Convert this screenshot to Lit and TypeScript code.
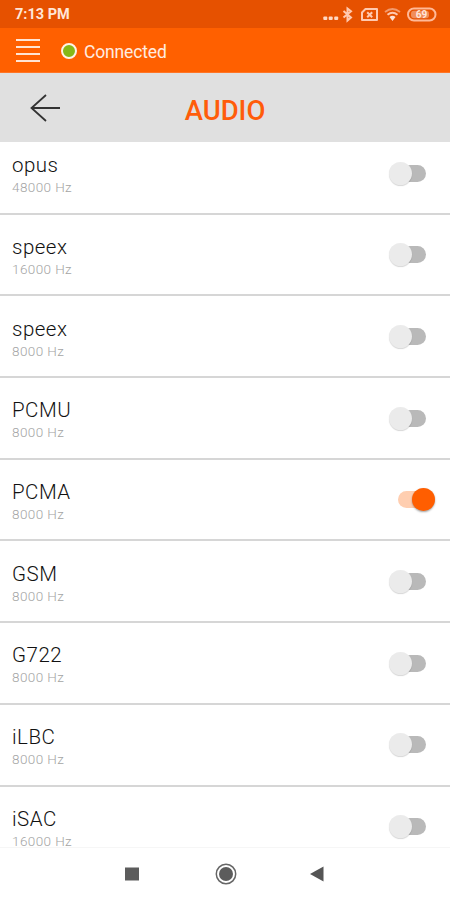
import { LitElement, html, css } from "lit";
import { customElement, property, state } from "lit/decorators.js";
import { classMap } from "lit/directives/class-map.js";

interface Codec {
  name: string;
  rate: number;
  enabled: boolean;
}

@customElement("toggle-switch")
class ToggleSwitch extends LitElement {
  @property({ type: Boolean }) on = false;

  static styles = css`
    :host { display: block; }
    .switch { display: flex; align-items: center; width: 46px; height: 24px; margin-top: 0.5px; }
    .track { width: 28px; height: 17px; border-radius: 9px; background: #b9b9b9; margin-left: 9px; }
    .thumb {
      width: 23px; height: 23px; border-radius: 50%; background: #ebebeb;
      box-shadow: 0 1px 1px rgba(0, 0, 0, 0.16); margin-left: -37px;
    }
    .on .track { background: #ffceb0; width: 30px; }
    .on .thumb { background: #ff5e00; margin-left: -16px; box-shadow: 0 1px 2px rgba(0, 0, 0, 0.35); }
  `;

  render() {
    return html`<div class=${classMap({ switch: true, on: this.on })}>
      <div class="track"></div><div class="thumb"></div>
    </div>`;
  }
}

@customElement("app-root")
class AppRoot extends LitElement {
  @state() codecs: Codec[] = [
    { name: "opus", rate: 48000, enabled: false },
    { name: "speex", rate: 16000, enabled: false },
    { name: "speex", rate: 8000, enabled: false },
    { name: "PCMU", rate: 8000, enabled: false },
    { name: "PCMA", rate: 8000, enabled: true },
    { name: "GSM", rate: 8000, enabled: false },
    { name: "G722", rate: 8000, enabled: false },
    { name: "iLBC", rate: 8000, enabled: false },
    { name: "iSAC", rate: 16000, enabled: false },
  ];

  static styles = css`
    :host {
      display: flex; flex-direction: column; width: 450px; height: 900px;
      overflow: hidden; background: #fff; font-family: Roboto, sans-serif;
    }
    svg { display: block; }
    .status {
      height: 28px; flex: none; background: #e65100; color: #ffe6d8; display: flex;
      align-items: center; justify-content: space-between; padding-left: 15px; box-sizing: border-box;
    }
    .time { font-size: 14.5px; font-weight: 700; line-height: 28px; padding-top: 1px; }
    .bar {
      height: 45px; flex: none; background: #ff6000; color: #ffece0; display: flex;
      align-items: center; box-sizing: border-box; padding-left: 16px; border-bottom: 1px solid #ff7526;
    }
    .burger { display: flex; flex-direction: column; gap: 4.8px; width: 24px; margin-top: 1px; }
    .burger i { height: 2px; background: #ffe4d4; }
    .dot {
      width: 12px; height: 12px; border-radius: 50%; background: #86b817;
      border: 2.5px solid #fff3e6; margin-left: 21px; margin-top: 1px;
    }
    .state { font-size: 17.5px; line-height: 20px; margin: 3px 0 0 7px; letter-spacing: -0.15px; }
    .header {
      height: 69px; flex: none; background: #e0e0e0; display: grid;
      grid-template-columns: 60px 1fr 60px; align-items: center;
    }
    .back { margin: 1px 0 0 29px; }
    .title { text-align: center; color: #ff5c0a; font-size: 27.5px; font-weight: 500; line-height: 34px; padding-top: 6px; }
    .list { flex: none; height: 705px; overflow: hidden; }
    .rows { margin-top: -9px; }
    .row {
      height: 81.7px; box-sizing: border-box; border-bottom: 2px solid #d6d6d6;
      display: flex; align-items: center; justify-content: space-between; padding: 0 15px 0 12px;
    }
    .name { font-size: 20.5px; font-weight: 300; line-height: 24px; color: #111; letter-spacing: 0.5px; margin-top: 2px; }
    .rate { font-size: 13.5px; font-weight: 300; line-height: 14px; color: #a4a4a4; letter-spacing: 0.4px; margin-top: 3px; }
    .nav {
      flex: 1; border-top: 1px solid #f6f6f6; display: flex; align-items: center;
      padding: 0 0 0 125px; box-sizing: border-box;
    }
    .home { margin-left: 76px; }
    .prev { margin-left: 73px; }
  `;

  render() {
    return html`
      <div class="status">
        <span class="time">7:13 PM</span>
        <svg width="130" height="28" viewBox="320 0 130 28" fill="none" stroke="#ffc9af">
          <g fill="#ffd8c4" stroke="none">
            <rect x="323.300" y="16.500" width="4" height="3.500" rx="1" /><rect x="328.700" y="16.500" width="4" height="3.500" rx="1" /><rect x="334.200" y="16.500" width="4" height="3.500" rx="1" />
          </g>
          <path d="M343.500 11l7.500 6.500-3.500 3V8.500l3.500 2.700-7.500 6.300" stroke-width="2" />
          <path d="M365.500 9h11.500v11h-15v-7.500z" stroke-width="2" stroke-linejoin="round" />
          <path d="M367.200 12.200l5 5m0-5l-5 5" stroke-width="2" />
          <path d="M385 12q7.500-6 15 0" stroke="#f29a6d" stroke-width="1.800" />
          <path d="M387.500 14.800q5-4 10 0" stroke-width="2" />
          <path d="M389.500 17q3-2.500 6 0l-3 4z" fill="#ffe3d5" stroke="none" />
          <rect x="408" y="8.600" width="27.500" height="11.800" rx="5.900" stroke="#ffb997" stroke-width="2" />
          <rect x="411" y="10.800" width="18" height="7.400" rx="3" fill="#f08d5b" stroke="none" />
          <text x="421.500" y="18" text-anchor="middle" font-size="10" font-weight="700" fill="#ffe6da" stroke="none">69</text>
        </svg>
      </div>
      <div class="bar">
        <div class="burger"><i></i><i></i><i></i><i></i></div>
        <div class="dot"></div>
        <span class="state">Connected</span>
      </div>
      <div class="header">
        <svg class="back" width="33" height="30" viewBox="0 0 33 30" fill="none" stroke="#333" stroke-width="1.8">
          <path d="M31 15H2.500M17 2L2.500 15L17 28" />
        </svg>
        <div class="title">AUDIO</div>
      </div>
      <div class="list"><div class="rows">
        ${this.codecs.map((c) => html`
          <div class="row">
            <div>
              <div class="name">${c.name}</div>
              <div class="rate">${c.rate} Hz</div>
            </div>
            <toggle-switch ?on=${c.enabled}></toggle-switch>
          </div>`)}
      </div></div>
      <div class="nav">
        <svg width="14" height="14"><rect width="14" height="13" y=".5" fill="#5c5c5c" /></svg>
        <svg class="home" width="22" height="22" viewBox="0 0 22 22">
          <circle cx="11" cy="11" r="9.700" fill="none" stroke="#666" stroke-width="1.500" />
          <circle cx="11" cy="11" r="7" fill="#5c5c5c" />
        </svg>
        <svg class="prev" width="14" height="16"><path d="M0 8L13.500 .5V15.500Z" fill="#555" /></svg>
      </div>
    `;
  }
}
